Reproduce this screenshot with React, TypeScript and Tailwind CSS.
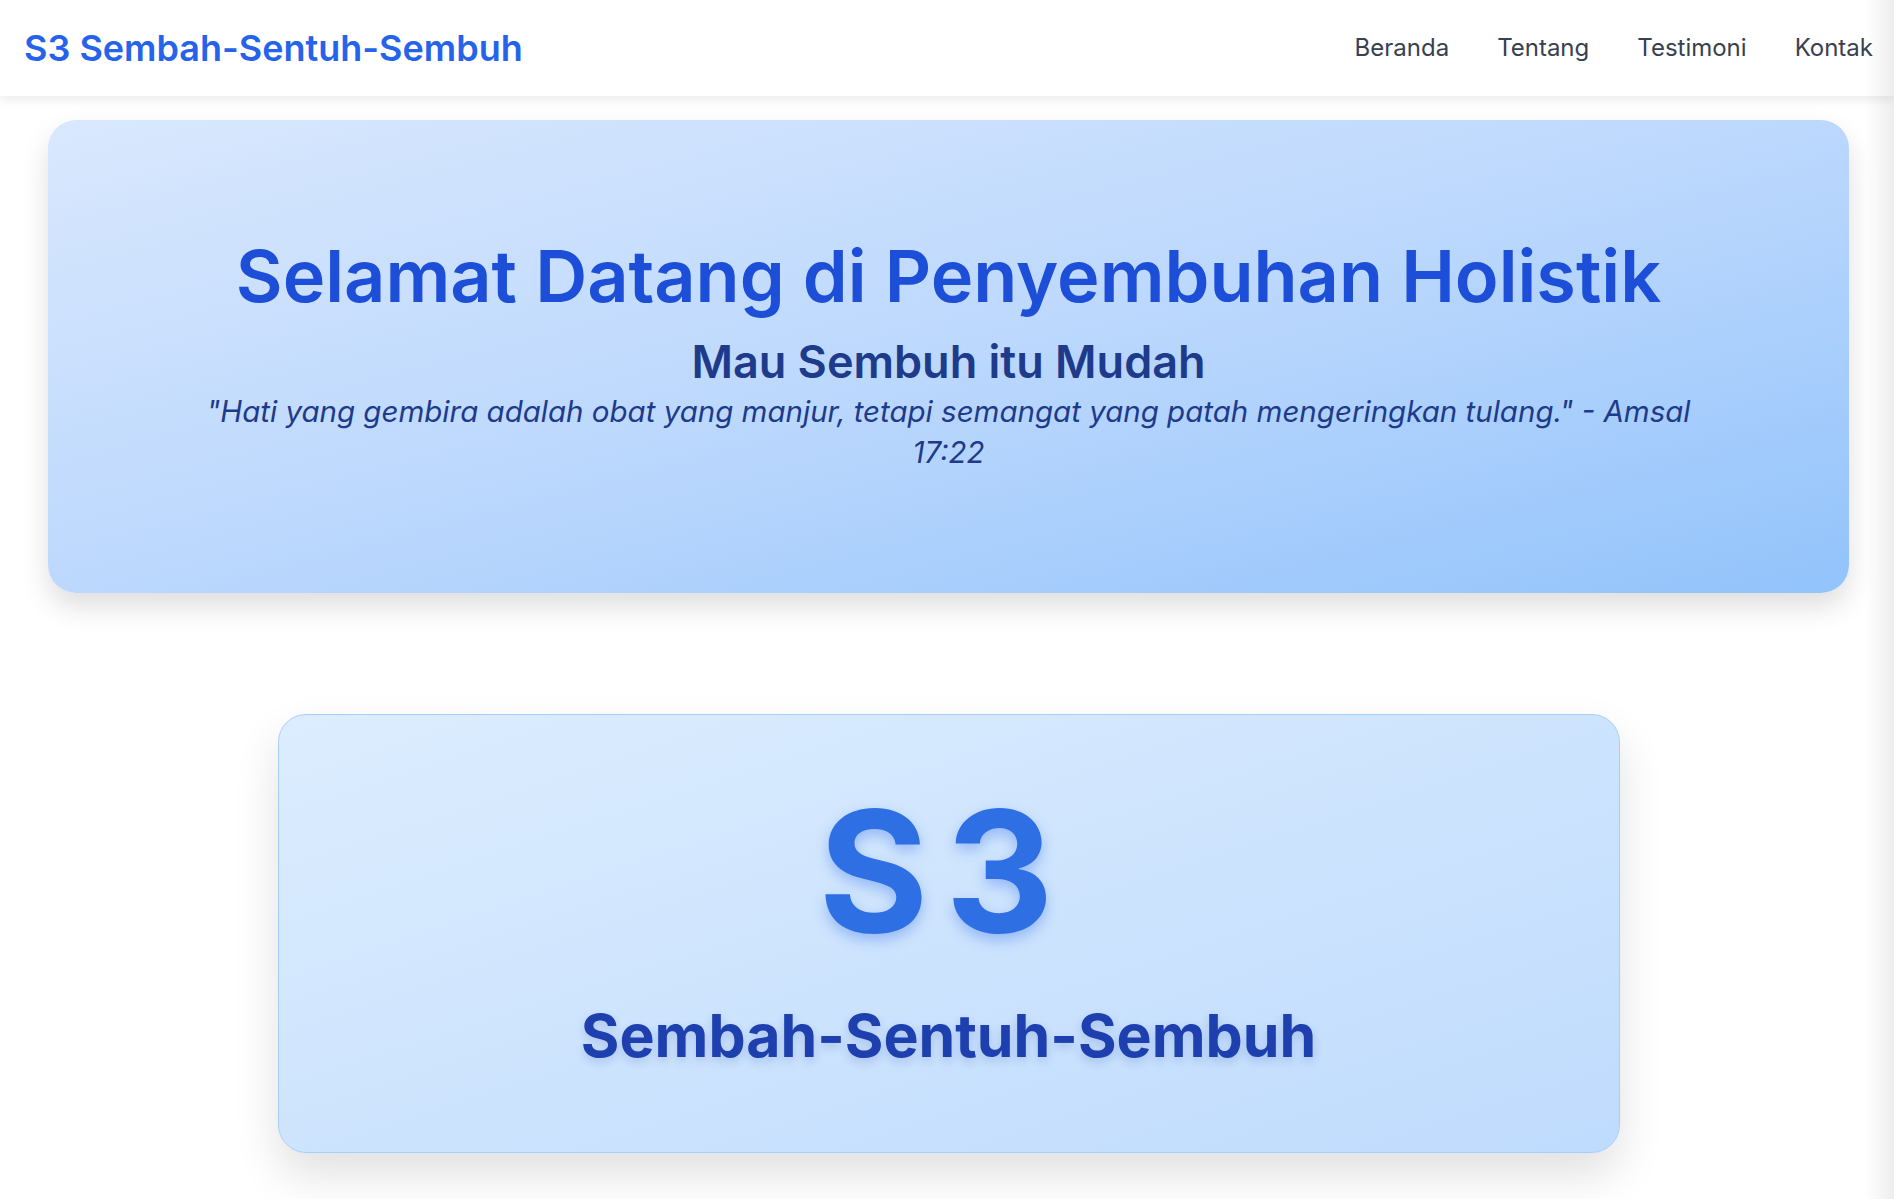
import React from "react";

export default function App() {
  return (
    <div className="min-h-screen bg-white font-['Inter','Noto_Sans',sans-serif] text-gray-800">
      <header className="relative z-10 flex h-[96px] items-center justify-between bg-white pl-[24px] pr-[21px] shadow-[0_4px_10px_rgba(0,0,0,0.08)]">
        <div className="text-[36px] font-semibold leading-none text-[#2563eb]">S3 Sembah-Sentuh-Sembuh</div>
        <nav className="flex items-center gap-[48px] text-[24px] text-[#374151]">
          <a>Beranda</a>
          <a>Tentang</a>
          <a>Testimoni</a>
          <a>Kontak</a>
        </nav>
      </header>

      <main className="pb-[80px]">
        <section className="ml-[48px] mr-[45px] mt-[24px] rounded-[28px] bg-gradient-to-br from-[#d9e8fd] via-[#bcd8fd] to-[#92c3fb] px-[150px] pb-[120px] pt-[120px] text-center shadow-[0_14px_28px_rgba(0,0,0,0.13)]">
          <h1 className="text-[72px] font-semibold leading-[72px] text-[#1d4ed8]">Selamat Datang di Penyembuhan Holistik</h1>
          <h2 className="mt-[26px] text-[45px] font-semibold leading-[48px] text-[#1e3a8a]">Mau Sembuh itu Mudah</h2>
          <p className="mt-[5px] text-[29.5px] italic leading-[41px] text-[#1e3a8a]">
            "Hati yang gembira adalah obat yang manjur, tetapi semangat yang patah mengeringkan tulang." - Amsal 17:22
          </p>
        </section>

        <div className="mt-[121px] flex justify-center pl-[3px]">
          <section className="w-[1342px] rounded-[28px] border border-[#a9cdfb] bg-gradient-to-br from-[#dcedfe] to-[#bfdbfd] pb-[86px] pt-[72px] text-center shadow-[0_22px_45px_rgba(0,0,0,0.12)]">
            <div className="pr-[8px] text-[168px] font-bold leading-[168px] tracking-[0.1em] text-[#2f6fe4] [text-shadow:0_6px_14px_rgba(37,99,235,0.35)]">
              S3
            </div>
            <div className="mt-[51px] text-[59px] font-bold leading-[60px] text-[#1e40af] [text-shadow:0_4px_10px_rgba(30,64,175,0.2)]">
              Sembah-Sentuh-Sembuh
            </div>
          </section>
        </div>
      </main>

      <div className="pointer-events-none fixed bottom-0 right-0 top-0 z-20 w-[28px] bg-gradient-to-r from-transparent to-black/[0.07]" />
    </div>
  );
}
